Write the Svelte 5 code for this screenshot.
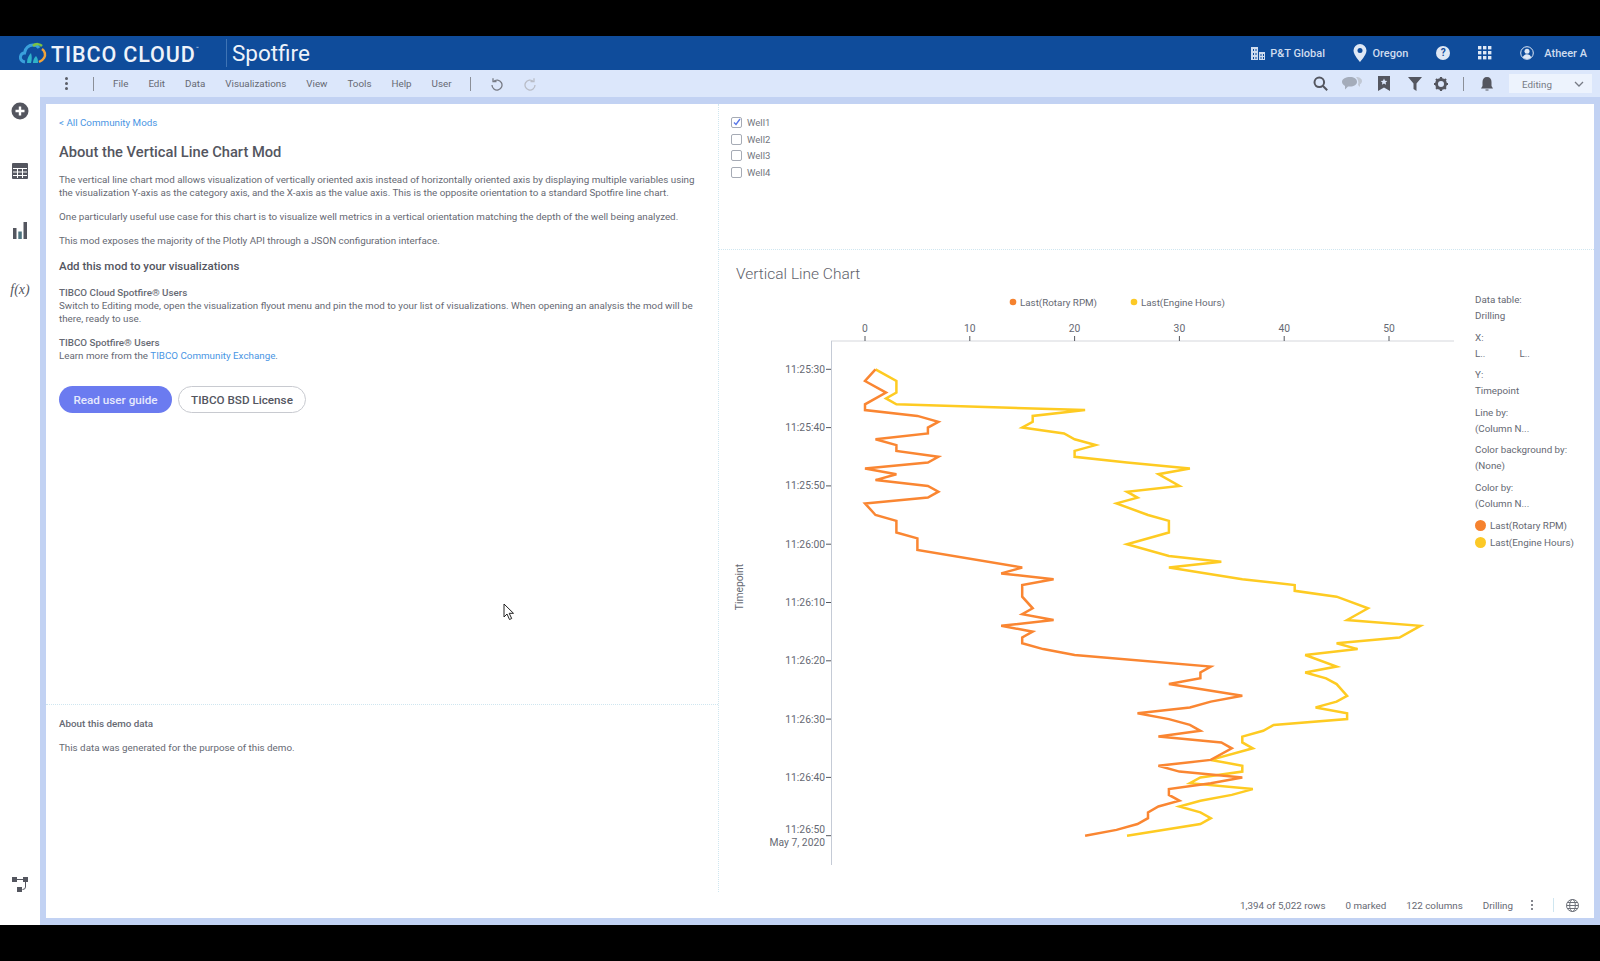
<script>
  const menus = ['File', 'Edit', 'Data', 'Visualizations', 'View', 'Tools', 'Help', 'User'];
  const wells = ['Well1', 'Well2', 'Well3', 'Well4'];

  // [second offset, value]
  const rpm = [[0,1],[2,0],[4,2],[6,0],[7,0],[8,5],[9,7],[10,6],[11,6],[12,1],[13,3],[14,3],[15,7],[16,6],[17,0],[18,3],[19,1],[20,6],[21,7],[22,6],[23,0],[25,1],[26,3],[28,3],[29,5],[31,5],[34,15],[35,13],[36,18],[37,15],[39,15],[41,16],[42,15],[43,18],[44,13],[45,16],[46,15],[47,15],[48,17],[49,20],[51,33],[52,32],[53,32],[54,29],[56,36],[57,33],[58,31],[59,26],[60,29],[61,31],[62,32],[63,28],[64,34],[65,35],[67,33],[68,28],[69,30],[70,36],[71,33],[72,29],[73,29],[74,30],[75,28],[76,27],[77,27],[78,26],[79,24],[80,21]];
  const hours = [[0,1],[2,3],[4,3],[5,2],[6,3],[7,21],[8,16],[9,16],[10,15],[11,19],[12,20],[13,22],[14,20],[15,20],[16,25],[17,31],[18,28],[20,30],[21,25],[22,26],[23,24],[25,27],[26,29],[28,29],[30,25],[32,29],[33,34],[34,29],[36,36],[37,41],[38,41],[39,45],[41,48],[43,46],[44,53],[46,51],[47,45],[48,47],[49,42],[51,45],[52,42],[53,44],[54,45],[56,46],[57,45],[58,43],[59,46],[60,46],[61,39],[62,38],[63,36],[64,36],[65,37],[67,33],[68,36],[69,36],[70,32],[71,31],[72,37],[73,35],[74,32],[75,30],[76,32],[77,33],[78,32],[80,25]];

  const xAt = (v) => 865 + v * 10.48;
  const yAt = (s) => 369.3 + s * 5.83;
  const line = (pts) => pts.map(([s, v]) => `${xAt(v).toFixed(1)},${yAt(s).toFixed(1)}`).join(' ');

  const xTicks = [0, 10, 20, 30, 40, 50];
  const yTicks = [
    ['11:25:30', 0], ['11:25:40', 10], ['11:25:50', 20], ['11:26:00', 30],
    ['11:26:10', 40], ['11:26:20', 50], ['11:26:30', 60], ['11:26:40', 70]
  ];
</script>

<div class="page">
  <header class="topbar">
    <div class="brand">
      <svg class="logo" width="28" height="22" viewBox="0 0 28 22">
        <path d="M6 20c-3.500-.5-5-3-4.500-5.500C2 12 4 11 5.500 11 6 6 10 3 14 3c3 0 5 1.500 6 3" fill="none" stroke="#3aa0dc" stroke-width="3"/>
        <path d="M14 4c3-3 7-2 9 0" fill="none" stroke="#7cc243" stroke-width="2.500"/>
        <path d="M23 7c3 2 4 6 2 9-1 2-3 3-5 4" fill="none" stroke="#f2a33a" stroke-width="2.500"/>
        <path d="M8 21c0-5 2-8 4-10 1 3 1 7 0 10zM14 21c0-3 1-5 3-7 2 2 2 5 2 7z" fill="#2fb3c9"/>
      </svg>
      <span class="cloud">TIBCO CLOUD</span><sup class="tm">™</sup>
      <span class="product">Spotfire</span>
    </div>
    <div class="account">
      <span class="acct org">
        <svg width="16" height="16" viewBox="0 0 16 16" fill="#cfdcef">
          <path d="M1 2h7v13H1zM9 7h6v8H9z"/>
          <path d="M3 4h1v2H3zM5.500 4h1v2h-1zM3 8h1v2H3zM5.500 8h1v2h-1zM3 12h1v2H3zM5.500 12h1v2h-1zM10.500 9h1v2h-1zM13 9h1v2h-1zM10.500 12h1v2h-1zM13 12h1v2h-1z" fill="#0f4c9b"/>
        </svg>
        P&amp;T Global
      </span>
      <span class="acct region">
        <svg width="14" height="18" viewBox="0 0 14 18"><path d="M7 0a6.500 6.500 0 0 0-6.500 6.500C.5 11 7 18 7 18s6.500-7 6.500-11.500A6.500 6.500 0 0 0 7 0z" fill="#dfe8f5"/><circle cx="7" cy="6.500" r="2.500" fill="#0f4c9b"/></svg>
        Oregon
      </span>
      <span class="help">?</span>
      <svg class="apps" width="14" height="14" viewBox="0 0 14 14" fill="#dfe8f5">
        {#each [0, 5, 10] as y}
          {#each [0, 5, 10] as x}
            <rect {x} {y} width="3.400" height="3.400" />
          {/each}
        {/each}
      </svg>
      <svg class="avatar" width="14" height="14" viewBox="0 0 14 14">
        <circle cx="7" cy="7" r="6.300" fill="none" stroke="#dfe8f5" />
        <circle cx="7" cy="5.300" r="2.500" fill="#dfe8f5" />
        <path d="M2.800 11.500c.5-2.500 2.500-3.200 4.200-3.200s3.700.7 4.200 3.200A6 6 0 0 1 7 13a6 6 0 0 1-4.200-1.500z" fill="#dfe8f5" />
      </svg>
      <span class="acct name">Atheer A</span>
    </div>
  </header>

  <div class="workspace">
    <nav class="sidebar">
      <svg width="18" height="18" viewBox="0 0 18 18">
        <circle cx="9" cy="9" r="8.500" fill="#54565f" />
        <path d="M9 4.500v9M4.500 9h9" stroke="#fff" stroke-width="2.400" />
      </svg>
      <svg width="16" height="16" viewBox="0 0 16 16">
        <rect width="16" height="16" rx="1" fill="#54565f" />
        <path d="M1 5.500h14M1 9h14M1 12.500h14M5.500 5.500V15M10.500 5.500V15" stroke="#fff" stroke-width="1" />
      </svg>
      <svg width="14" height="17" viewBox="0 0 14 17" fill="#54565f">
        <rect x="0" y="6" width="3.500" height="11" />
        <rect x="5.300" y="9.500" width="3.500" height="7.500" fill="#4f7480" />
        <rect x="10.500" y="0" width="3.500" height="17" />
      </svg>
      <span class="fx">f(x)</span>
      <svg class="flow" width="16" height="16" viewBox="0 0 16 16" fill="#54565f">
        <rect x="0" y="1" width="5" height="5" />
        <rect x="11" y="1" width="5" height="5" />
        <rect x="5" y="11" width="5" height="5" />
        <path d="M5 3.500h6M13.500 6v5q0 2.500-3 2.500" fill="none" stroke="#54565f" />
      </svg>
    </nav>

    <div class="content">
      <div class="toolbar">
        <div class="tools-left">
          <span class="kebab"><i></i><i></i><i></i></span>
          <span class="vsep first"></span>
          <div class="menus">
            {#each menus as m}<span>{m}</span>{/each}
          </div>
          <span class="vsep"></span>
          <svg class="undo" width="14" height="14" viewBox="0 0 14 14" fill="none" stroke="#777b85" stroke-width="1.300">
            <path d="M3.500 4.500A5 5 0 1 1 2 8" /><path d="M3 1.200v3.500h3.500" />
          </svg>
          <svg class="redo" width="14" height="14" viewBox="0 0 14 14" fill="none" stroke="#b9bdc7" stroke-width="1.300">
            <path d="M10.500 4.500A5 5 0 1 0 12 8" /><path d="M11 1.200v3.500H7.500" />
          </svg>
        </div>
        <div class="tools-right">
          <svg width="15" height="15" viewBox="0 0 15 15" fill="none" stroke="#54565f" stroke-width="2">
            <circle cx="6.300" cy="6.300" r="4.800" /><path d="M10 10l4.200 4.200" />
          </svg>
          <svg class="chat" width="20" height="13" viewBox="0 0 20 13">
            <path d="M8 0c4 0 7 2 7 4.800s-3 4.800-7 4.800H6l-3 3v-3.600C1 8 0 6.500 0 4.800 0 2 4 0 8 0z" fill="#a4acba" />
            <path d="M14 0c3 0 6 1.500 6 4 0 1.500-1 2.500-2 3.300V10l-2-2c1-3 0-6-2-8z" fill="#c1c8d4" />
          </svg>
          <svg class="mark" width="12" height="15" viewBox="0 0 12 15">
            <path d="M0 0h12v15l-6-3.500L0 15z" fill="#54565f" />
            <path d="M6 2.500l1 2.200 2.300.2-1.700 1.600.5 2.300L6 7.600 3.900 8.800l.5-2.300-1.700-1.600L5 4.700z" fill="#dce7fb" />
          </svg>
          <svg class="funnel" width="14" height="14" viewBox="0 0 14 14"><path d="M0 0h14L8.500 6.500V14l-3-2V6.500z" fill="#54565f" /></svg>
          <svg class="gear" width="14" height="14" viewBox="0 0 14 14">
            <circle cx="7" cy="7" r="4.500" fill="none" stroke="#54565f" stroke-width="3" />
            <path d="M7 0v14M0 7h14M2 2l10 10M12 2L2 12" stroke="#54565f" stroke-width="2.200" stroke-dasharray="2.500 9 2.500" />
          </svg>
          <span class="vsep"></span>
          <svg class="bell" width="12" height="14" viewBox="0 0 12 14">
            <path d="M6 0c3 0 4.500 2 4.500 5v4l1.500 2.500H0L1.500 9V5C1.500 2 3 0 6 0z" fill="#54565f" />
            <path d="M4.500 12.500h3v1h-3z" fill="#54565f" />
          </svg>
          <div class="mode">
            <span>Editing</span>
            <svg width="10" height="6" viewBox="0 0 10 6" fill="none" stroke="#777b85" stroke-width="1.300"><path d="M1 1l4 4 4-4" /></svg>
          </div>
        </div>
      </div>

      <main class="stage">
        <div class="panels">
          <section class="left">
            <div class="about">
              <a class="back" href="#top">&lt; All Community Mods</a>
              <h1>About the Vertical Line Chart Mod</h1>
              <p>The vertical line chart mod allows visualization of vertically oriented axis instead of horizontally oriented axis by displaying multiple variables using the visualization Y-axis as the category axis, and the X-axis as the value axis. This is the opposite orientation to a standard Spotfire line chart.</p>
              <p>One particularly useful use case for this chart is to visualize well metrics in a vertical orientation matching the depth of the well being analyzed.</p>
              <p>This mod exposes the majority of the Plotly API through a JSON configuration interface.</p>
              <h2>Add this mod to your visualizations</h2>
              <p><b>TIBCO Cloud Spotfire® Users</b><br />Switch to Editing mode, open the visualization flyout menu and pin the mod to your list of visualizations. When opening an analysis the mod will be there, ready to use.</p>
              <p><b>TIBCO Spotfire® Users</b><br />Learn more from the <a href="#top">TIBCO Community Exchange</a>.</p>
              <div class="buttons">
                <button class="primary">Read user guide</button>
                <button class="ghost">TIBCO BSD License</button>
              </div>
            </div>
            <div class="demo">
              <b>About this demo data</b>
              <p>This data was generated for the purpose of this demo.</p>
            </div>
          </section>

          <section class="right">
            <div class="filters">
              {#each wells as w, i}
                <label class="well">
                  <span class="box" class:on={i === 0}>
                    {#if i === 0}
                      <svg width="8" height="8" viewBox="0 0 8 8" fill="none" stroke="#5a78e8" stroke-width="1.400"><path d="M1 4.500l2 2 4-5.500" /></svg>
                    {/if}
                  </span>
                  {w}
                </label>
              {/each}
            </div>

            <div class="viz">
              <div class="plot">
                <h3>Vertical Line Chart</h3>
                <svg class="chart" width="751" height="607" viewBox="719 285 751 607">
                  <circle cx="1013" cy="302" r="3.300" fill="#f5822f" />
                  <text class="lbl key-lbl" x="1020" y="305.500">Last(Rotary RPM)</text>
                  <circle cx="1134" cy="302" r="3.300" fill="#fcc926" />
                  <text class="lbl key-lbl" x="1141" y="305.500">Last(Engine Hours)</text>

                  <path d="M831 341H1454" stroke="#d5d7dc" />
                  <path d="M831.500 341V865" stroke="#c5cbd6" />
                  {#each xTicks as t}
                    <text class="lbl" x={xAt(t)} y="332" text-anchor="middle">{t}</text>
                    <path d="M{xAt(t)} 336V341" stroke="#55585f" />
                  {/each}
                  {#each yTicks as [label, s]}
                    <text class="lbl" x="825" y={yAt(s) + 3.500} text-anchor="end">{label}</text>
                    <path d="M826 {yAt(s)}H831" stroke="#55585f" />
                  {/each}
                  <text class="lbl" x="825" y="833" text-anchor="end">11:26:50</text>
                  <text class="lbl" x="825" y="846" text-anchor="end">May 7, 2020</text>
                  <path d="M826 835.700H831" stroke="#55585f" />
                  <text class="lbl" transform="translate(743 587) rotate(-90)" text-anchor="middle">Timepoint</text>

                  <polyline points={line(hours)} fill="none" stroke="#fecb22" stroke-width="2.500" stroke-linejoin="miter" />
                  <polyline points={line(rpm)} fill="none" stroke="#fa8632" stroke-width="2.500" stroke-linejoin="miter" />
                </svg>
              </div>

              <aside class="legend">
                <dl>
                  <dt>Data table:</dt><dd>Drilling</dd>
                  <dt>X:</dt><dd class="pair"><span>L..</span><span>L..</span></dd>
                  <dt>Y:</dt><dd>Timepoint</dd>
                  <dt>Line by:</dt><dd>(Column N...</dd>
                  <dt>Color background by:</dt><dd>(None)</dd>
                  <dt>Color by:</dt><dd>(Column N...</dd>
                </dl>
                <div class="key"><i class="orange"></i>Last(Rotary RPM)</div>
                <div class="key"><i class="yellow"></i>Last(Engine Hours)</div>
              </aside>
            </div>
          </section>
        </div>

        <footer class="status">
          <span>1,394 of 5,022 rows</span>
          <span>0 marked</span>
          <span>122 columns</span>
          <span>Drilling</span>
          <span class="kebab small"><i></i><i></i><i></i></span>
          <span class="vsep faint"></span>
          <svg class="globe" width="13" height="13" viewBox="0 0 13 13" fill="none" stroke="#6b6f78">
            <circle cx="6.500" cy="6.500" r="6" />
            <ellipse cx="6.500" cy="6.500" rx="2.800" ry="6" />
            <path d="M.5 6.500h12M1.500 3.500h10M1.500 9.500h10" />
          </svg>
        </footer>
      </main>
    </div>
  </div>

  <svg class="cursor" width="12" height="18" viewBox="0 0 12 18">
    <path d="M1 1v13l3-3 2.500 5.500 2.200-1L6.200 10.300H10.500z" fill="#fff" stroke="#222" />
  </svg>
</div>

<style>
  :global(body) {
    margin: 0;
    background: #000;
  }
  .page {
    position: relative;
    height: 961px;
    box-sizing: border-box;
    padding: 36px 0;
    display: flex;
    flex-direction: column;
    background: #000;
    font-family: Roboto, "Liberation Sans", sans-serif;
    font-size: 9.800px;
    line-height: 13px;
    color: #666973;
  }
  .topbar {
    height: 34px;
    flex: none;
    display: flex;
    align-items: center;
    justify-content: space-between;
    background: #0f4c9b;
    color: #dfe8f5;
  }
  .brand {
    display: flex;
    align-items: center;
    padding-left: 19px;
  }
  .logo {
    margin-right: 4px;
  }
  .cloud {
    margin-top: 2px;
    font-size: 21.500px;
    font-weight: 500;
    letter-spacing: .900px;
    color: #eef3fa;
  }
  .tm {
    font-size: 5px;
    line-height: 1;
    align-self: flex-start;
    margin-top: 7px;
  }
  .product {
    margin-left: 27px;
    padding-left: 5px;
    border-left: 1px solid #3f74b5;
    font-size: 22.500px;
    line-height: 28px;
    color: #eef3fa;
  }
  .account {
    display: flex;
    align-items: center;
    padding-right: 13px;
    font-size: 11px;
    font-weight: 500;
    color: #cfdcef;
  }
  .acct {
    display: flex;
    align-items: center;
    gap: 6px;
  }
  .org {
    gap: 4px;
  }
  .region {
    margin-left: 28px;
    gap: 5.500px;
  }
  .help {
    width: 14px;
    height: 14px;
    margin-left: 28px;
    border-radius: 50%;
    background: #dfe8f5;
    color: #0f4c9b;
    font-weight: 700;
    font-size: 10px;
    line-height: 14px;
    text-align: center;
  }
  .apps {
    margin-left: 28px;
  }
  .avatar {
    margin-left: 28px;
  }
  .name {
    margin-left: 10px;
  }
  .workspace {
    flex: 1;
    display: flex;
    min-height: 0;
  }
  .sidebar {
    width: 40px;
    flex: none;
    box-sizing: border-box;
    padding: 32px 0 33px;
    display: flex;
    flex-direction: column;
    align-items: center;
    gap: 43px;
    background: #fff;
  }
  .fx {
    font-family: "Liberation Serif", serif;
    font-style: italic;
    font-size: 14px;
    line-height: 16px;
    color: #54565f;
  }
  .flow {
    margin-top: auto;
  }
  .content {
    flex: 1;
    min-width: 0;
    display: flex;
    flex-direction: column;
  }
  .toolbar {
    height: 27px;
    flex: none;
    display: flex;
    justify-content: space-between;
    align-items: center;
    background: #dce7fb;
  }
  .tools-left,
  .tools-right {
    display: flex;
    align-items: center;
  }
  .kebab {
    display: flex;
    flex-direction: column;
    gap: 2px;
    margin-left: 25px;
  }
  .kebab i {
    width: 3px;
    height: 3px;
    border-radius: 50%;
    background: #5b5e67;
  }
  .kebab.small i {
    width: 2px;
    height: 2px;
  }
  .vsep {
    display: block;
    width: 1px;
    height: 14px;
    background: #8b8f98;
  }
  .vsep.first {
    margin-left: 25px;
  }
  .vsep.faint {
    background: #cfe6f0;
  }
  .menus {
    display: flex;
    gap: 20px;
    margin: 0 19px 0 19px;
    color: #666973;
  }
  .undo {
    margin-left: 19px;
  }
  .redo {
    margin-left: 19px;
  }
  .tools-right > svg {
    flex: none;
  }
  .tools-right {
    padding-right: 8px;
  }
  .chat {
    margin-left: 14px;
  }
  .mark {
    margin-left: 16px;
  }
  .funnel {
    margin-left: 18px;
  }
  .gear {
    margin-left: 12px;
  }
  .tools-right .vsep {
    margin-left: 15px;
  }
  .bell {
    margin-left: 17px;
  }
  .mode {
    width: 83px;
    height: 19px;
    margin-left: 16px;
    box-sizing: border-box;
    padding: 1px 8px 0 13px;
    display: flex;
    align-items: center;
    justify-content: space-between;
    background: #edf3fd;
    color: #777b85;
  }
  .stage {
    flex: 1;
    min-height: 0;
    margin: 0;
    padding: 7px 6px 7px 6px;
    display: flex;
    flex-direction: column;
    background: #c2d2f3;
    position: relative;
  }
  .panels {
    flex: 1;
    min-height: 0;
    display: flex;
    background: #fff;
  }
  .left {
    width: 673px;
    flex: none;
    display: flex;
    flex-direction: column;
    border-right: 1px dotted #cfe6f0;
    box-sizing: border-box;
  }
  .about {
    flex: 1;
    padding: 12px 13px 0;
  }
  a {
    color: #4a96e4;
    text-decoration: none;
  }
  .back {
    display: block;
  }
  h1 {
    margin: 14px 0 10.500px;
    font-size: 14.700px;
    line-height: 19px;
    font-weight: 500;
    color: #54565f;
  }
  p {
    margin: 0 0 11px;
  }
  h2 {
    margin: 12.500px 0 11.500px;
    font-size: 11.500px;
    line-height: 15px;
    font-weight: 500;
    color: #54565f;
  }
  b {
    font-weight: 500;
  }
  .buttons {
    display: flex;
    gap: 6px;
    margin-top: 24.500px;
  }
  button {
    height: 27px;
    padding: 0;
    border-radius: 14px;
    font-family: inherit;
    font-size: 11.700px;
    font-weight: 500;
  }
  .primary {
    width: 113px;
    border: none;
    background: #6b7bf0;
    color: #e6e9fd;
  }
  .ghost {
    width: 128px;
    border: 1px solid #c8cad0;
    background: #fff;
    color: #54565f;
  }
  .demo {
    height: 188px;
    box-sizing: border-box;
    padding: 12px 13px 0;
    border-top: 1px dotted #cfe6f0;
  }
  .demo p {
    margin-top: 11px;
  }
  .right {
    flex: 1;
    min-width: 0;
    display: flex;
    flex-direction: column;
  }
  .filters {
    height: 146px;
    flex: none;
    box-sizing: border-box;
    padding: 10px 0 0 12px;
    border-bottom: 1px dotted #cfe6f0;
  }
  .well {
    display: flex;
    align-items: center;
    gap: 5px;
    height: 16.700px;
    font-size: 9.500px;
    color: #72757d;
  }
  .box {
    width: 9px;
    height: 9px;
    display: flex;
    align-items: center;
    justify-content: center;
    border: 1px solid #a6abb5;
    border-radius: 2px;
  }
  .viz {
    flex: 1;
    min-height: 0;
    display: flex;
  }
  .plot h3 {
    margin: 0;
    height: 35px;
    box-sizing: border-box;
    padding: 13px 0 0 17px;
    font-size: 15.500px;
    line-height: 22px;
    font-weight: 300;
    color: #5f626b;
  }
  .chart {
    display: block;
  }
  .lbl {
    font-size: 10.300px;
    fill: #666973;
  }
  .key-lbl {
    font-size: 9.800px;
  }
  .legend {
    padding: 42px 0 0 5px;
  }
  dl {
    margin: 0;
  }
  dt {
    height: 16px;
    line-height: 16px;
  }
  dd {
    margin: 0 0 5.500px;
    height: 16px;
    line-height: 16px;
  }
  .pair {
    display: flex;
    gap: 34px;
  }
  .key {
    display: flex;
    align-items: center;
    gap: 4px;
    height: 17px;
  }
  .key i {
    width: 11px;
    height: 11px;
    border-radius: 50%;
  }
  .orange {
    background: #f5822f;
  }
  .yellow {
    background: #fcc926;
  }
  .status {
    height: 26px;
    flex: none;
    display: flex;
    align-items: center;
    justify-content: flex-end;
    gap: 20px;
    padding-right: 15px;
    background: #fff;
  }
  .status .kebab {
    margin-left: -2px;
  }
  .status .vsep {
    margin-left: 0;
  }
  .globe {
    margin-left: -8px;
  }
  .cursor {
    position: absolute;
    left: 503px;
    top: 603px;
  }
</style>
